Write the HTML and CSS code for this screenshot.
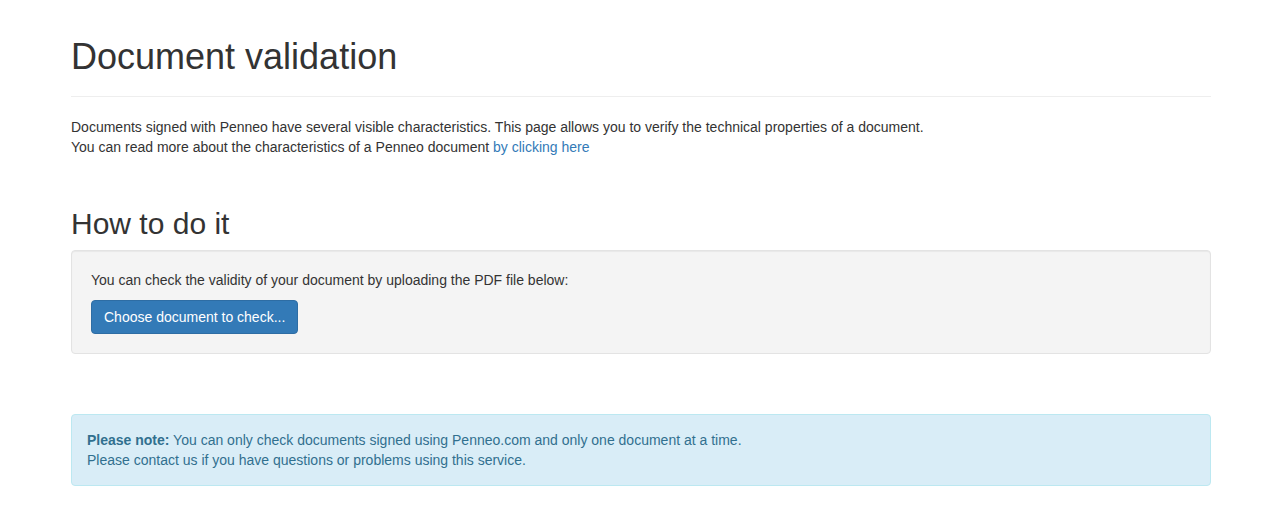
FILE: index.html
```html
<!DOCTYPE html>
<html lang="en">
<head>
<meta charset="utf-8">
<title>Document validation</title>
<link rel="stylesheet" href="styles.css">
</head>
<body>
<div class="container">
  <div class="page-header">
    <h1>Document validation</h1>
  </div>
  <p class="intro">Documents signed with Penneo have several visible characteristics. This page allows you to verify the technical properties of a document.<br>You can read more about the characteristics of a Penneo document <a href="#">by clicking here</a></p>

  <h2>How to do it</h2>
  <div class="well">
    <p>You can check the validity of your document by uploading the PDF file below:</p>
    <button class="btn" type="button">Choose document to check...</button>
  </div>

  <div class="alert">
    <strong>Please note:</strong> You can only check documents signed using Penneo.com and only one document at a time.<br>
    Please contact us if you have questions or problems using this service.
  </div>
</div>
</body>
</html>
```

FILE: styles.css
```css
* { box-sizing: border-box; }
html, body { margin: 0; padding: 0; }
body {
  font-family: "Liberation Sans", Arial, Helvetica, sans-serif;
  font-size: 14px;
  line-height: 20px;
  color: #333;
  background: #fff;
}
.container {
  margin: 0 62px 0 71px;
  padding-bottom: 20px;
}
.page-header {
  margin: 37px 0 20px;
  padding-bottom: 9px;
  border-bottom: 1px solid #eee;
}
h1 {
  margin: 0 0 10px;
  font-size: 36px;
  font-weight: 500;
  line-height: 1.1;
}
p { margin: 0 0 10px; }
a { color: #337ab7; text-decoration: none; }
h2 {
  margin: 50px 0 10px;
  font-size: 30px;
  font-weight: 500;
  line-height: 1.1;
}
.well {
  padding: 19px;
  margin-bottom: 20px;
  background: #f4f4f4;
  border: 1px solid #e3e3e3;
  border-radius: 4px;
  box-shadow: inset 0 1px 1px rgba(0,0,0,.05);
}
.btn {
  display: inline-block;
  padding: 6px 12px;
  font-family: inherit;
  font-size: 14px;
  line-height: 20px;
  color: #fff;
  background: #337ab7;
  border: 1px solid #2e6da4;
  border-radius: 4px;
  cursor: pointer;
}
.alert {
  margin-top: 60px;
  padding: 15px;
  color: #31708f;
  background: #d9edf7;
  border: 1px solid #bce8f1;
  border-radius: 4px;
}
```
